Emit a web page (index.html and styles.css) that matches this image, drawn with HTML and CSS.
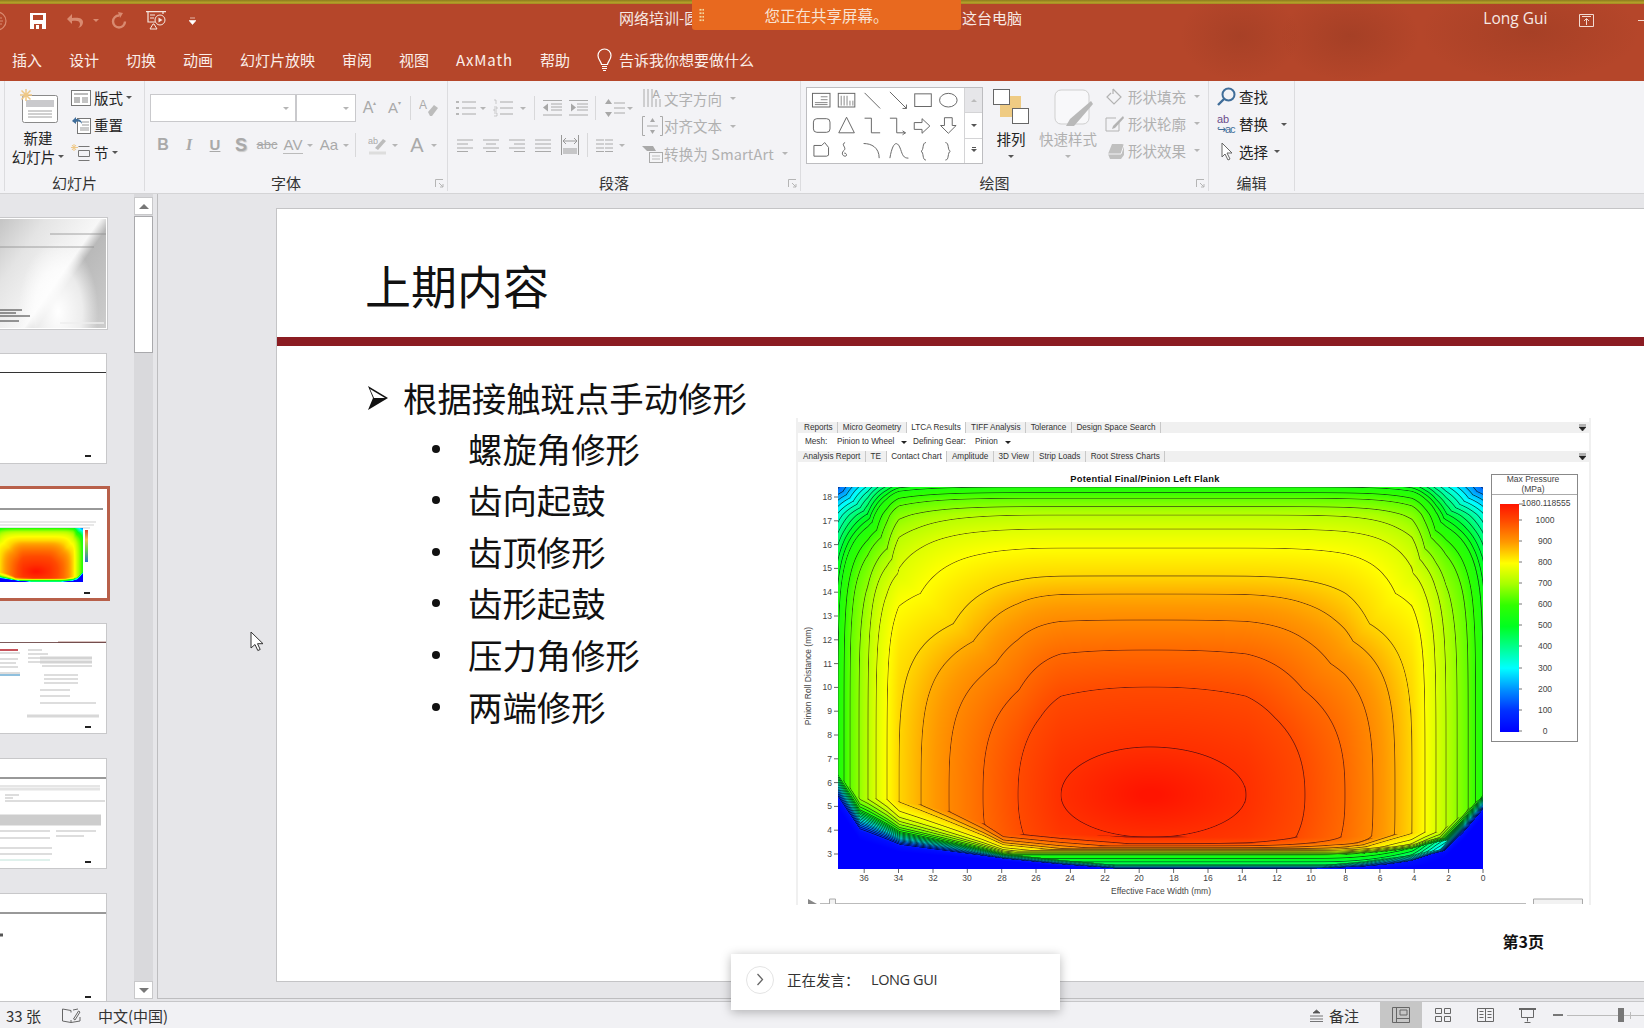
FILE: index.html
```html
<!DOCTYPE html>
<html lang="zh-CN">
<head>
<meta charset="utf-8">
<title>网络培训</title>
<link rel="stylesheet" href="styles.css">
</head>
<body>
<header class="appbar">
  <div class="topband"></div>
  <div class="titlerow">
    <svg class="t-office" width="10" height="24" viewBox="0 0 10 24"><circle cx="-1" cy="12" r="9" fill="none" stroke="#d98a70" stroke-width="1.2"/><path d="M0 9h4M0 12h5M0 15h4" stroke="#d98a70"/></svg>
    <svg class="t-save" width="16" height="16" viewBox="0 0 16 16"><path d="M0 0h16v16H0z" fill="#fff"/><path d="M3 2h10v5H3z" fill="#b5462a"/><path d="M4 11h8v5H4z" fill="#b5462a"/><path d="M6 12h3v4H6z" fill="#fff"/></svg>
    <svg class="t-undo" width="18" height="16" viewBox="0 0 18 16"><path d="M6 1L1 6l5 5V8c5-1 8 0 8 3 0 2-1 3-2 4 4-1 5-4 5-6 0-4-5-5-11-4z" fill="#d98a70"/></svg>
    <span class="caret caret-t"></span>
    <svg class="t-redo" width="18" height="18" viewBox="0 0 18 18"><path d="M9 3.500a6 6 0 1 0 6 6" fill="none" stroke="#d98a70" stroke-width="2.4"/><path d="M8 0l5 1-3 5z" fill="#d98a70"/></svg>
    <svg class="t-show" width="21" height="19" viewBox="0 0 21 19"><path d="M0 .7h20M2 1v10h7M17 1v2" fill="none" stroke="#f6e6df" stroke-width="1.2"/><circle cx="14" cy="9" r="5" fill="none" stroke="#f6e6df"/><path d="M12.500 6.500l4 2.500-4 2.500z" fill="#f6e6df"/><path d="M4 18l3-5h1l3 5z" fill="none" stroke="#f6e6df"/><path d="M4 4h5M4 7h4" stroke="#f6e6df"/></svg>
    <svg class="t-more" width="7" height="8" viewBox="0 0 7 8"><path d="M1 1h5M0 3.500h7L3.500 7.500z" fill="#fff" stroke="#fff" stroke-width=".6"/></svg>
    <span class="doc-title">网络培训-圆</span>
    <span class="doc-where">这台电脑</span>
    <span class="user">Long Gui</span>
    <svg class="t-ropt" width="15" height="13" viewBox="0 0 15 13"><path d="M.5.500h14v12H.5zM3 2.500h9M7.500 11V5M5 7l2.500-2.500L10 7" fill="none" stroke="#f3dbd2"/></svg>
    <span class="t-min"></span>
  </div>
  <nav class="tabs">
    <span>插入</span><span>设计</span><span>切换</span><span>动画</span><span>幻灯片放映</span><span>审阅</span><span>视图</span><span class="axmath">AxMath</span><span>帮助</span>
    <span class="tellme">
      <svg width="15" height="24" viewBox="0 0 15 24"><path d="M4.500 16.500C4 13 1 11.500 1 7.500a6.500 6.500 0 0 1 13 0c0 4-3 5.500-3.500 9z" fill="none" stroke="#fff" stroke-width="1.200"/><path d="M5 18.500h5M5 20.500h5M6 22.500h3" stroke="#fff" stroke-width="1.200"/></svg>
      告诉我你想要做什么
    </span>
  </nav>
</header>

<section class="ribbon">
  <div class="group g1">
    <div class="gbody">
      <div class="bigbtn newslide">
        <svg width="40" height="36" viewBox="0 0 40 36"><rect x="4.500" y="7.500" width="35" height="27" rx="2" fill="#fff" stroke="#8a8a8a"/><rect x="8" y="12" width="28" height="7" fill="#c9c9cc"/><path d="M10 23h24M10 26h24M10 29h24" stroke="#a0a0a0"/><path d="M8 1v12M2 7h12M3.500 2.500l9 9M12.500 2.500l-9 9" stroke="#efc886" stroke-width="1.500"/></svg>
        <span class="btxt">新建</span>
        <span class="btxt">幻灯片<i class="caret"></i></span>
      </div>
      <div class="col3">
        <div class="item"><svg width="20" height="16" viewBox="0 0 20 16"><rect x=".5" y=".5" width="19" height="15" fill="#fff" stroke="#777"/><path d="M3 3h14v2H3zM3 7h6v6H3z" fill="#bbb"/><path d="M11 8h6M11 10h6M11 12h6" stroke="#888"/></svg><span>版式</span><i class="caret"></i></div>
        <div class="item"><svg width="20" height="18" viewBox="0 0 20 18"><rect x="6.500" y="2.500" width="13" height="15" fill="#fff" stroke="#777"/><path d="M11 6h7M11 9h7M9 12h9M9 14h9" stroke="#999"/><path d="M1 5l4-4v2c4 0 6 2 6 5-1-2-3-3-6-2v2z" fill="#3f6d99"/></svg><span>重置</span></div>
        <div class="item"><svg width="20" height="18" viewBox="0 0 20 18"><path d="M7.500 2.500h11M7.500 6.500h11v6h-11zM7.500 16.500h11" fill="none" stroke="#777"/><path d="M3 0v7M0 3.500h7M1 1l4 5M5 1L1 6" stroke="#efc886"/></svg><span>节</span><i class="caret"></i></div>
      </div>
    </div>
    <div class="glabel">幻灯片</div>
  </div>

  <div class="group g2">
    <div class="gbody rows2 off">
      <div class="rrow">
        <div class="combo c-font"><i class="caret"></i></div>
        <div class="combo c-size"><i class="caret"></i></div>
        <span class="glyph w25 big">A<sup>▴</sup></span>
        <span class="glyph w25">A<sup>▾</sup></span>
        <span class="vsep"></span>
        <svg class="eraser" width="20" height="20" viewBox="0 0 20 20"><text x="0" y="11" font-size="12" fill="#aaa" font-family="Liberation Sans">A</text><path d="M9 14l6-7 4 3-6 8h-2z" fill="#bcbcbc"/></svg>
      </div>
      <div class="rrow r2">
        <span class="glyph w26 bold">B</span>
        <span class="glyph w26 ital">I</span>
        <span class="glyph w26 under">U</span>
        <span class="glyph w26 shadow">S</span>
        <span class="glyph w26 strike">abc</span>
        <span class="glyph w26 av">AV</span><i class="caret caret-s"></i>
        <span class="glyph w26">Aa</span><i class="caret caret-s"></i>
        <span class="vsep sp1"></span>
        <svg class="hilite" width="20" height="20" viewBox="0 0 20 20"><text x="0" y="9" font-size="9" fill="#aaa" font-family="Liberation Sans">ab</text><path d="M7 13l8-9 3 2-8 9z" fill="#bcbcbc"/><path d="M1 18h17" stroke="#ddd" stroke-width="3"/></svg>
        <i class="caret caret-h"></i>
        <span class="glyph w26 fontA">A</span><i class="caret caret-s"></i>
      </div>
    </div>
    <div class="glabel">字体<svg class="launch" width="9" height="9" viewBox="0 0 9 9"><path d="M.5 8V.5H8M4 4l4 4M8 5v3H5" fill="none" stroke="#b5b5b5"/></svg></div>
  </div>

  <div class="group g3">
    <div class="gbody g3body off">
      <div class="rows2 para">
        <div class="rrow">
          <svg class="p-bul" width="20" height="18" viewBox="0 0 20 18"><path d="M6 3h14M6 9h14M6 15h14" stroke="#aaa"/><path d="M0 2h3v2H0zM0 8h3v2H0zM0 14h3v2H0z" fill="#b8b8b8"/></svg><i class="caret caret-p"></i>
          <svg class="p-num" width="20" height="18" viewBox="0 0 20 18"><path d="M7 3h13M7 9h13M7 15h13" stroke="#aaa"/><path d="M1 1h2v4M1 8h3v2H1v2h3M1 14h3v3H1" fill="none" stroke="#b8b8b8" stroke-width=".7"/></svg><i class="caret caret-p2"></i>
          <span class="vsep s-a"></span>
          <svg class="p-ind" width="19" height="16" viewBox="0 0 19 16"><path d="M8 4h11M8 7h11M8 10h11M0 .5h19M0 15h19" stroke="#aaa"/><path d="M0 7.500l5-4v8z" fill="#a7a7a7"/></svg>
          <svg class="p-ind2" width="19" height="16" viewBox="0 0 19 16"><path d="M8 4h11M8 7h11M8 10h11M0 .5h19M0 15h19" stroke="#aaa"/><path d="M7 7.500l-5-4v8z" fill="#a7a7a7"/></svg>
          <span class="vsep s-b"></span>
          <svg class="p-ls" width="20" height="18" viewBox="0 0 20 18"><path d="M9 4h11M9 9h11M9 14h11" stroke="#aaa"/><path d="M3.500 0l3.500 5H0zM3.500 18L0 13h7z" fill="#a7a7a7"/></svg><i class="caret"></i>
        </div>
        <div class="rrow r2b">
          <svg class="p-al" width="16" height="13" viewBox="0 0 16 13"><path d="M0 1h16M0 5h11M0 9h16M0 12.500h11" stroke="#aaa"/></svg>
          <svg class="p-al" width="16" height="13" viewBox="0 0 16 13"><path d="M0 1h16M3 5h10M0 9h16M3 12.500h10" stroke="#aaa"/></svg>
          <svg class="p-al" width="16" height="13" viewBox="0 0 16 13"><path d="M0 1h16M5 5h11M0 9h16M5 12.500h11" stroke="#aaa"/></svg>
          <svg class="p-al" width="16" height="13" viewBox="0 0 16 13"><path d="M0 1h16M0 5h16M0 9h16M0 12.500h16" stroke="#aaa"/></svg>
          <svg class="p-dist" width="18" height="20" viewBox="0 0 18 20"><path d="M.5 0v20M17.500 0v20M2 14h14M2 16h14M2 18h14" stroke="#999"/><path d="M2 6h14M5 3L2 6l3 3M13 3l3 3-3 3" fill="none" stroke="#999"/></svg>
          <span class="vsep s-c"></span>
          <svg class="p-col" width="17" height="13" viewBox="0 0 17 13"><path d="M0 1h17M0 5h17M0 9h17M0 12.500h17" stroke="#aaa"/><path d="M8.500 0v13" stroke="#f3f3f6"/></svg><i class="caret"></i>
        </div>
      </div>
      <div class="col3 pcol">
        <div class="item"><svg width="21" height="20" viewBox="0 0 21 20"><path d="M2 0v18M6 0v18M10 0v18M14 10v8M18 10v8" stroke="#aaa"/><text x="10.500" y="9" font-size="11" fill="#aaa" font-family="Liberation Sans">A</text></svg><span>文字方向</span><i class="caret caret-r"></i></div>
        <div class="item"><svg width="21" height="20" viewBox="0 0 21 20"><path d="M3 .5H.5v19H3M18 .5h2.500v19H18M5 10h11" fill="none" stroke="#aaa"/><path d="M10.500 2L8 6h5zM10.500 18L8 14h5z" fill="#a7a7a7"/></svg><span>对齐文本</span><i class="caret caret-r"></i></div>
        <div class="item"><svg width="21" height="18" viewBox="0 0 21 18"><path d="M0 1h11l3 5H5z" fill="#a9a9a9"/><rect x="7.500" y="7.500" width="13" height="10" fill="#f5f5f7" stroke="#aaa"/><path d="M10 11h8M10 14h8" stroke="#bbb"/></svg><span class="sm-art">转换为 SmartArt</span><i class="caret caret-r"></i></div>
      </div>
    </div>
    <div class="glabel">段落<svg class="launch" width="9" height="9" viewBox="0 0 9 9"><path d="M.5 8V.5H8M4 4l4 4M8 5v3H5" fill="none" stroke="#b5b5b5"/></svg></div>
  </div>

  <div class="group g4">
    <div class="gbody g4body">
      <div class="gallery">
        <svg width="158" height="75" viewBox="0 0 158 77">
          <g fill="none" stroke="#666">
            <rect x="3.500" y="5.500" width="18" height="14"/><path d="M12 9h7M12 12h7M6 15h13M6 17h13" stroke="#888"/>
            <rect x="30" y="5.500" width="17" height="14"/><path d="M33 8v10M36 8v10M39 8v10M42 13v5M45 13v5" stroke="#888"/>
            <path d="M57 5l16 16M83 4l17 17M100 21v-4M100 21h-4"/>
            <rect x="108.500" y="6" width="17" height="13"/>
            <ellipse cx="143" cy="12.500" rx="9" ry="7"/>
            <rect x="4.500" y="31.500" width="17" height="14" rx="3.500"/>
            <path d="M38.500 30l8 16h-16z"/>
            <path d="M57 31h7v15h9M83 31h7v15h9M99 46l-3-2M99 46l-3 2"/>
            <path d="M108 35.500h8v-4l8 7.500-8 7.500v-4h-8z"/>
            <path d="M139 30.500h8v8h4l-8 8-8-8h4z"/>
            <path d="M5 59h8l3-3 4 5v8l-2 1H5z"/>
            <path d="M37 56c-5 2 2 5-1 8-3 2-2 6 1 6s1-4-1-3"/>
            <path d="M56 57c8 0 16 4 16 15M83 72c3-18 8-18 11-9 2 6 3 9 8 9"/>
            <path d="M120 56c-4 0-2 8-5 9 3 1 1 9 5 9M140 56c4 0 2 8 5 9-3 1-1 9-5 9"/>
          </g>
        </svg>
        <div class="gscroll"><span class="gs dim"><i class="caret up"></i></span><span class="gs"><i class="caret"></i></span><span class="gs"><i class="caret more"></i></span></div>
      </div>
      <div class="bigbtn arrange">
        <svg width="36" height="36" viewBox="0 0 36 36"><rect x="7" y="7" width="21" height="21" fill="#efcb83"/><rect x=".5" y=".5" width="16" height="15" fill="#fff" stroke="#666"/><rect x="19.500" y="19.500" width="16" height="15" fill="#fff" stroke="#666"/></svg>
        <span class="btxt">排列</span><i class="caret low"></i>
      </div>
      <div class="bigbtn quick off">
        <svg width="40" height="38" viewBox="0 0 40 38"><rect x="1" y="1" width="34" height="34" rx="6" fill="#f8f8fa" stroke="#cfcfcf"/><path d="M37 12l2 3-12 14-7 8H12l4-7z" fill="#b9b9b9"/></svg>
        <span class="btxt">快速样式</span><i class="caret low"></i>
      </div>
      <div class="col3 dcol off">
        <div class="item"><svg width="20" height="18" viewBox="0 0 20 18"><path d="M8 1l8 8-7 7-7-7 4-4M8 1v5" fill="none" stroke="#b3b3b3" stroke-width="1.200"/></svg><span>形状填充</span><i class="caret caret-r"></i></div>
        <div class="item"><svg width="20" height="18" viewBox="0 0 20 18"><path d="M11 3H1v13h13V8" fill="none" stroke="#b3b3b3"/><path d="M18 1l1 2-9 10-3 1 1-3z" fill="#b3b3b3"/></svg><span>形状轮廓</span><i class="caret caret-r"></i></div>
        <div class="item"><svg width="20" height="18" viewBox="0 0 20 18"><path d="M3 12L7 2h10a2 2 0 0 1 2 2v9l-3 4H5z" fill="#c0c0c0"/><path d="M3 12h13l3-9" fill="none" stroke="#f3f3f6"/></svg><span>形状效果</span><i class="caret caret-r"></i></div>
      </div>
    </div>
    <div class="glabel">绘图<svg class="launch" width="9" height="9" viewBox="0 0 9 9"><path d="M.5 8V.5H8M4 4l4 4M8 5v3H5" fill="none" stroke="#b5b5b5"/></svg></div>
  </div>

  <div class="group g5">
    <div class="gbody">
      <div class="col3 ecol">
        <div class="item"><svg width="19" height="19" viewBox="0 0 19 19"><circle cx="11.500" cy="7.500" r="6" fill="none" stroke="#3f6d99" stroke-width="2"/><path d="M7 12l-6 6" stroke="#3f6d99" stroke-width="2.400"/></svg><span>查找</span></div>
        <div class="item"><span class="abac">ab<br><b>↪ac</b></span><span>替换</span><i class="caret caret-e1"></i></div>
        <div class="item"><svg width="19" height="19" viewBox="0 0 19 19"><path d="M5 1v14l3-3 3 6 2-1-3-6h5z" fill="#fff" stroke="#666"/></svg><span>选择</span><i class="caret caret-e2"></i></div>
      </div>
    </div>
    <div class="glabel nolaunch">编辑</div>
  </div>
</section>

<main class="workspace">
  <aside class="sidebar">
    <div class="thumbs">
      <div class="thumb t-cover">
        <svg width="107" height="111" viewBox="0 0 107 111"><path d="M50 16h56M0 29h94" stroke="#8d8d8d" stroke-width=".8"/><path d="M0 92h22M0 95h16M0 98h30M0 103h19" stroke="#333" stroke-width="1"/><path d="M60 105h44" stroke="#eee" stroke-width="1.500"/></svg>
      </div>
      <div class="thumb">
        <svg width="107" height="111" viewBox="0 0 107 111"><path d="M0 19.500h106" stroke="#333"/><path d="M85 103h6" stroke="#222" stroke-width="2"/></svg>
      </div>
      <div class="thumb thumb-sel">
        <svg class="sel-svg" width="104" height="109" viewBox="0 0 104 109"><path d="M0 20h103" stroke="#333"/><path d="M0 33h96M0 36h94M0 39h90" stroke="#bbb" stroke-width=".7"/><path d="M84 104h6" stroke="#222" stroke-width="2"/></svg>
        <canvas id="miniChart" class="mini" width="91" height="54"></canvas>
        <span class="minileg"></span>
      </div>
      <div class="thumb">
        <svg width="107" height="111" viewBox="0 0 107 111"><path d="M58 19h48" stroke="#b0837d"/><path d="M0 19.500h106" stroke="#5a3030" stroke-width=".8"/><path d="M0 27h18" stroke="#c7525a" stroke-width="2"/><path d="M0 30h20M0 36h18M0 40h16M0 44h18M0 50h20" stroke="#bbb"/><path d="M0 52h20" stroke="#8fc0de" stroke-width="2"/><path d="M28 27h14M28 31h20M28 35h12M48 35h40M28 39h12M48 39h40M42 43h50" stroke="#aaa" stroke-width=".8"/><path d="M40 35h52M40 39h52" stroke="#d3d3d3" stroke-width="3"/><path d="M44 52h34M44 56h34M44 60h34M40 67h30M40 73h30M40 80h56" stroke="#aaa" stroke-width=".8"/><path d="M27 93h72" stroke="#d8d8d8" stroke-width="3"/><path d="M85 104h6" stroke="#222" stroke-width="2"/></svg>
      </div>
      <div class="thumb">
        <svg width="107" height="111" viewBox="0 0 107 111"><path d="M0 20h106" stroke="#333"/><path d="M0 28h100" stroke="#ccc"/><path d="M0 31h100" stroke="#e4e4e4" stroke-width="3"/><path d="M5 37h14M5 40h8M5 43h100" stroke="#aaa" stroke-width=".8"/><path d="M0 62h101" stroke="#cdcdcd" stroke-width="11"/><path d="M0 73h50M0 80h50M0 90h52M0 96h52M56 73h40M56 78h28" stroke="#aaa" stroke-width=".8"/><path d="M0 102h50" stroke="#bfe3d9"/><path d="M85 104h6" stroke="#222" stroke-width="2"/></svg>
      </div>
      <div class="thumb">
        <svg width="107" height="111" viewBox="0 0 107 111"><path d="M0 20h106" stroke="#333"/><path d="M0 42h3" stroke="#555" stroke-width="3"/><path d="M85 104h6" stroke="#222" stroke-width="2"/></svg>
      </div>
    </div>
    <div class="vscroll">
      <span class="sbtn"><i class="tri tri-up"></i></span>
      <span class="sthumb"></span>
      <span class="strack"></span>
      <span class="sbtn"><i class="tri"></i></span>
    </div>
  </aside>

  <div class="stage">
    <article class="slide">
      <h1 class="slide-title">上期内容</h1>
      <div class="slide-rule"></div>
      <div class="slide-body">
        <ul class="bullets">
          <li class="lvl1"><svg class="arrow" width="22" height="26" viewBox="0 0 22 26"><path d="M1 1l20 12L1 25l5-12z" fill="#111"/><path d="M3 4l15 9H7z" fill="#fff"/></svg>根据接触斑点手动修形</li>
          <li class="lvl2">螺旋角修形</li>
          <li class="lvl2">齿向起鼓</li>
          <li class="lvl2">齿顶修形</li>
          <li class="lvl2">齿形起鼓</li>
          <li class="lvl2">压力角修形</li>
          <li class="lvl2">两端修形</li>
        </ul>
        <div class="figwrap">
          <figure class="figure">
            <div class="tabstrip">
              <span>Reports</span><span>Micro Geometry</span><span class="on">LTCA Results</span><span>TIFF Analysis</span><span>Tolerance</span><span>Design Space Search</span>
              <svg class="ovf" width="7" height="7" viewBox="0 0 7 7"><path d="M0 1h7M0 3h7L3.500 7z" fill="#222" stroke="#222" stroke-width=".6"/></svg>
            </div>
            <div class="meshrow">
              <span class="m1">Mesh:</span><span class="m2">Pinion to Wheel</span><i class="tcar"></i><span class="m3">Defining Gear:</span><span class="m4">Pinion</span><i class="tcar"></i>
            </div>
            <div class="tabstrip sub">
              <span>Analysis Report</span><span>TE</span><span class="on">Contact Chart</span><span>Amplitude</span><span>3D View</span><span>Strip Loads</span><span>Root Stress Charts</span>
              <svg class="ovf" width="7" height="7" viewBox="0 0 7 7"><path d="M0 1h7M0 3h7L3.500 7z" fill="#222" stroke="#222" stroke-width=".6"/></svg>
            </div>
            <div class="chart">
              <svg class="chart-svg" width="793" height="442" viewBox="0 0 793 442">
                <defs>
                  <linearGradient id="scale" x1="0" y1="0" x2="0" y2="1">
                    <stop offset="0" stop-color="#ff1400"/><stop offset=".074" stop-color="#ff4a00"/><stop offset=".167" stop-color="#ff9800"/><stop offset=".26" stop-color="#ffff00"/><stop offset=".35" stop-color="#a8ff00"/><stop offset=".444" stop-color="#30ff00"/><stop offset=".537" stop-color="#00ff20"/><stop offset=".63" stop-color="#00ff90"/><stop offset=".72" stop-color="#00ffff"/><stop offset=".815" stop-color="#0090ff"/><stop offset=".907" stop-color="#0030ff"/><stop offset="1" stop-color="#0000ff"/>
                  </linearGradient>
                </defs>
                <text class="ct-title" x="349" y="20" text-anchor="middle">Potential Final/Pinion Left Flank</text>
                <text class="ct-ax" transform="translate(15 214) rotate(-90)" text-anchor="middle">Pinion Roll Distance (mm)</text>
                <text class="ct-ax" x="365" y="432" text-anchor="middle">Effective Face Width (mm)</text>
                <path d="M38 35h4M38 58.800h4M38 82.600h4M38 106.400h4M38 130.200h4M38 154h4M38 177.800h4M38 201.600h4M38 225.400h4M38 249.200h4M38 273h4M38 296.800h4M38 320.600h4M38 344.400h4M38 368.200h4M38 392h4M68.200 407v4M102.500 407v4M137 407v4M171.300 407v4M205.700 407v4M240 407v4M274.400 407v4M308.800 407v4M343.200 407v4M377.600 407v4M412 407v4M446.300 407v4M480.700 407v4M515 407v4M549.500 407v4M583.900 407v4M618.200 407v4M652.600 407v4M687 407v4" stroke="#666" fill="none"/>
                <g class="ct-tick" text-anchor="end">
                  <text x="36" y="38">18</text><text x="36" y="62">17</text><text x="36" y="86">16</text><text x="36" y="109">15</text><text x="36" y="133">14</text><text x="36" y="157">13</text><text x="36" y="181">12</text><text x="36" y="205">11</text><text x="36" y="228">10</text><text x="36" y="252">9</text><text x="36" y="276">8</text><text x="36" y="300">7</text><text x="36" y="324">6</text><text x="36" y="347">5</text><text x="36" y="371">4</text><text x="36" y="395">3</text>
                </g>
                <g class="ct-tick" text-anchor="middle">
                  <text x="68" y="419">36</text><text x="102.500" y="419">34</text><text x="137" y="419">32</text><text x="171" y="419">30</text><text x="206" y="419">28</text><text x="240" y="419">26</text><text x="274" y="419">24</text><text x="309" y="419">22</text><text x="343" y="419">20</text><text x="378" y="419">18</text><text x="412" y="419">16</text><text x="446" y="419">14</text><text x="481" y="419">12</text><text x="515" y="419">10</text><text x="549.500" y="419">8</text><text x="584" y="419">6</text><text x="618" y="419">4</text><text x="652.500" y="419">2</text><text x="687" y="419">0</text>
                </g>
                <rect x="695.500" y="12.500" width="86" height="267" fill="#fff" stroke="#888"/>
                <path d="M696 32.500h85" stroke="#aaa"/>
                <rect x="704" y="42" width="19" height="228" fill="url(#scale)"/>
                <g class="ct-tick" text-anchor="middle">
                  <text x="737" y="20">Max Pressure</text><text x="737" y="29.500">(MPa)</text>
                  <text x="750" y="44">1080.118555</text><text x="749" y="61">1000</text><text x="749" y="82">900</text><text x="749" y="103">800</text><text x="749" y="124">700</text><text x="749" y="145">600</text><text x="749" y="166">500</text><text x="749" y="187">400</text><text x="749" y="209">300</text><text x="749" y="230">200</text><text x="749" y="251">100</text><text x="749" y="272">0</text>
                </g>
                <path d="M723 42h4M723 58h3M723 79h3M723 100h3M723 121h3M723 142h3M723 163h3M723 184h3M723 206h3M723 227h3M723 248h3M723 269h3" stroke="#777"/>
                <path d="M12 437l9 5H12z" fill="#888"/>
                <path d="M24 441.500h706" stroke="#bbb"/>
                <path d="M33.500 442v-5h6v5M737.500 442v-5h49v5" fill="#f2f2f2" stroke="#aaa"/>
              </svg>
              <canvas id="heatmap" class="heat" width="645" height="382"></canvas>
            </div>
          </figure>
          <div class="pageno">第3页</div>
        </div>
      </div>
    </article>
  </div>
</main>

<footer class="statusbar">
  <span class="st-count">33 张</span>
  <svg class="st-note" width="19" height="15" viewBox="0 0 19 15"><path d="M9 2.500L.5 1v12L9 14.500M9 2.500v2M9 12v2.500M9 14.500l9-1.500V9M11 2l5-1M13 12l5-8-1.500-1-5 8z" fill="none" stroke="#666"/></svg>
  <span class="st-lang">中文(中国)</span>
  <span class="st-right">
    <span class="st-notes"><svg width="13" height="13" viewBox="0 0 13 13"><path d="M3 4l3.500-3L10 4zM0 7h13M0 10h13M0 12.500h13" fill="#555" stroke="#555" stroke-width=".8"/></svg>备注</span>
    <span class="vbtn active"><svg width="18" height="16" viewBox="0 0 18 16"><path d="M.5.5h17v15H.5zM4.500.5v15M8 3h7v5H8zM4.500 11.500h13" fill="none" stroke="#666"/></svg></span>
    <span class="vbtn"><svg width="16" height="14" viewBox="0 0 16 14"><path d="M.5.500h6v5h-6zM9.500.5h6v5h-6zM.5 8.500h6v5h-6zM9.500 8.500h6v5h-6z" fill="none" stroke="#666"/></svg></span>
    <span class="vbtn"><svg width="17" height="14" viewBox="0 0 17 14"><path d="M.5.500h16v13H.5zM8.500.5v13M2.500 3.500h4M2.500 6.500h4M2.500 9.500h4M10.500 3.500h4M10.500 6.500h4M10.500 9.500h4" fill="none" stroke="#666"/></svg></span>
    <span class="vbtn"><svg width="17" height="15" viewBox="0 0 17 15"><path d="M0 1h17" stroke="#666" stroke-width="2"/><path d="M2.500 1v8.500h12V1M8.500 9.500v4M5.500 14.500h6" fill="none" stroke="#666"/></svg></span>
    <span class="zminus"></span>
    <span class="zslider"><i class="ztick"></i><i class="zthumb"></i></span>
  </span>
</footer>

<div class="share-banner"><span class="grip"></span>您正在共享屏幕。</div>
<div class="speaker">
  <span class="sp-circle"><svg width="8" height="13" viewBox="0 0 8 13"><path d="M1.500 1l5 5.500-5 5.500" fill="none" stroke="#666" stroke-width="1.300"/></svg></span>
  <span class="sp-label">正在发言：</span><span class="sp-name">LONG GUI</span>
</div>
<svg class="cursor" width="14" height="21" viewBox="0 0 14 21"><path d="M1 1v16l4-3.500 2.800 6 2.400-1-2.700-5.800H13z" fill="#fff" stroke="#333" stroke-width="1"/></svg>

<script src="chart.js"></script>
</body>
</html>
```

FILE: styles.css
```css
* { box-sizing: border-box; }
html, body { margin: 0; padding: 0; }
body {
  position: relative;
  width: 1644px;
  height: 1028px;
  overflow: hidden;
  display: flex;
  flex-direction: column;
  background: #e6e6e9;
  color: #222;
  font-family: "Noto Sans CJK SC", "Liberation Sans", sans-serif;
  font-size: 14.5px;
}
svg { display: block; flex: none; }
i { display: block; font-style: normal; }

/* ------ caret ------ */
.caret {
  display: inline-block;
  flex: none;
  width: 0;
  height: 0;
  border-left: 3px solid transparent;
  border-right: 3px solid transparent;
  border-top: 3px solid #555;
}
.off .caret { border-top-color: #b5b5b5; }

/* ------ title bar ------ */
.appbar {
  height: 81px;
  flex: none;
  background:
    radial-gradient(ellipse 60px 45px at 1240px 36px, rgba(120, 45, 25, .22), transparent 100%),
    radial-gradient(ellipse 70px 45px at 1350px 36px, rgba(120, 45, 25, .26), transparent 100%),
    radial-gradient(ellipse 110px 50px at 1530px 32px, rgba(120, 45, 25, .24), transparent 100%),
    #b5462a;
  color: #fff;
}
.topband { height: 4px; background: linear-gradient(#8c7a1e, #b3a029 60%, #a38a25); }
.titlerow { height: 35px; display: flex; align-items: center; padding-bottom: 2px; }
.t-office { margin-right: 22px; margin-left: -2px; }
.t-save { margin-right: 20px; }
.t-undo { margin-right: 9px; }
.caret-t { border-top-color: #d98a70; margin-right: 11px; }
.t-redo { margin-right: 18px; }
.t-show { margin-right: 22px; }
.t-more { margin-right: 423px; }
.doc-title { width: 344px; margin-top: -5px; font-size: 15px; line-height: 20px; color: #f7e9e4; white-space: nowrap; }
.doc-where { width: 523px; margin-top: -5px; font-size: 15px; line-height: 20px; color: #f7e9e4; }
.user { width: 96px; margin-top: -5px; font-family: "Open Sans", sans-serif; font-size: 15.500px; line-height: 20px; color: #f7e9e4; }
.t-ropt { margin-right: 44px; }
.t-min { width: 6px; height: 1px; background: #f3dbd2; }

.tabs {
  height: 42px;
  display: flex;
  align-items: center;
  gap: 27px;
  padding-left: 12px;
  font-size: 15px;
  line-height: 22px;
  color: #fbeee9;
}
.axmath { letter-spacing: .85px; }
.tellme { display: flex; align-items: center; gap: 7px; }

/* ------ ribbon ------ */
.ribbon {
  height: 113px;
  flex: none;
  display: flex;
  padding-left: 4px;
  background: #f3f3f6;
  border-bottom: 1px solid #d4d4d6;
}
.group { border-right: 1px solid #dcdcdf; flex: none; height: 110px; }
.g1 { width: 141px; border-left: 1px solid #dcdcdf; }
.g2 { width: 303px; }
.g3 { width: 353px; }
.g4 { width: 408px; }
.g5 { width: 86px; }
.gbody { height: 92px; display: flex; line-height: 20px; }
.glabel { position: relative; height: 20px; line-height: 20px; font-size: 15px; text-align: center; padding-right: 20px; color: #333; }
.g1 .glabel, .nolaunch { padding-right: 0; }
.launch { position: absolute; right: 3px; top: 6px; }

.bigbtn { display: flex; flex-direction: column; align-items: center; }
.btxt { display: flex; align-items: center; gap: 3px; line-height: 19px; height: 19px; white-space: nowrap; }
.newslide { width: 66px; padding-top: 7px; }
.newslide svg { margin: 0 0 4px 0; }
.col3 { padding-top: 3px; }
.item { display: flex; align-items: center; height: 27.500px; gap: 3px; white-space: nowrap; }

.off, .off .btxt { color: #b0b0b0; }

.rows2 { display: block; padding: 13px 0 0 5px; }
.rrow { display: flex; align-items: center; height: 28px; }
.rrow.r2, .rrow.r2b { margin-top: 9px; }
.r2b { padding-left: 1px; }
.combo { position: relative; height: 28px; background: #fff; border: 1px solid #c9c9cc; }
.c-font { width: 146px; }
.c-size { width: 60px; margin-right: 1px; }
.combo .caret { position: absolute; right: 6px; top: 12px; }
.glyph { display: block; flex: none; text-align: center; font-family: "Liberation Sans", sans-serif; font-size: 15px; color: #a9a9a9; line-height: 20px; }
.glyph sup { font-size: 6px; vertical-align: 8px; line-height: 0; }
.big { font-size: 16px; }
.w25 { width: 25px; }
.w26 { width: 26px; }
.vsep { display: block; flex: none; width: 1px; height: 24px; background: #d8d8da; }
.g2 .vsep { margin-left: 3px; }
.eraser { margin-left: 8px; }
.bold { font-weight: bold; font-size: 16px; }
.ital { font-style: italic; font-family: "Liberation Serif", serif; font-weight: bold; font-size: 16px; }
.under { text-decoration: underline; font-weight: bold; }
.shadow { font-weight: bold; font-size: 18px; text-shadow: 1px 1px 1px #c8c8c8; }
.strike { text-decoration: line-through; font-size: 13px; }
.av { border-bottom: 1px solid #bbb; line-height: 16px; width: 20px; margin: 0 3px; }
.fontA { font-size: 20px; margin-left: 6px; font-weight: 500; }
.caret-s { margin-left: 1px; margin-right: 3px; }
.sp1 { margin: 0 12px 0 3px !important; }
.hilite { margin-right: 4px; }

.g3body { display: flex; }
.para { width: 190px; padding-left: 8px; }
.pcol { padding-left: 4px; padding-top: 4px; }
.pcol .item { gap: 1px; }
.sm-art { letter-spacing: .15px; }
.p-bul { margin-right: 4px; }
.caret-p { margin-right: 7px; }
.p-num { margin-right: 7px; }
.caret-p2 { margin-right: 8px; }
.s-a { margin: 0 8px 0 0; }
.p-ind { margin-right: 7px; }
.p-ind2 { margin-right: 7px; }
.s-b { margin-right: 9px; }
.p-ls { margin-right: 2px; }
.p-al { margin-right: 10px; }
.p-dist { margin: 0 8px 0 0; }
.s-c { margin-right: 8px; }
.p-col { margin-right: 6px; }
.caret-r { margin-left: 7px; }

.g4body { display: flex; }
.gallery { display: flex; margin: 6px 0 0 5px; width: 177px; height: 77px; background: #fff; border: 1px solid #bdbdc0; }
.gscroll { width: 18px; flex: none; display: flex; flex-direction: column; margin-left: -1px; border-left: 1px solid #d4d4d6; }
.gs { display: flex; flex: 1; align-items: center; justify-content: center; border-bottom: 1px solid #d4d4d6; background: #fff; }
.gs:last-child { border-bottom: 0; }
.gs.dim { background: #e6e6e9; }
.caret.up { transform: rotate(180deg); }
.dim .caret { border-top-color: #bbb; }
.more { box-shadow: 0 -3px 0 -1px #555; }
.arrange { width: 40px; margin-left: 8px; padding-top: 8px; }
.arrange svg { margin-bottom: 4px; }
.arrange .low, .quick .low { margin-top: 7px; }
.quick { width: 62px; margin-left: 6px; padding-top: 8px; }
.quick svg { margin: 0 0 2px 12px; }
.dcol { padding-left: 6px; padding-top: 2px; }
.dcol .item { height: 27px; }
.dcol .caret-r { margin-left: 5px; }

.ecol { padding-left: 8px; padding-top: 2px; }
.abac { display: block; width: 19px; font-family: "Liberation Sans", sans-serif; font-size: 11px; line-height: 10px; color: #6b4c8a; }
.abac b { font-weight: normal; color: #3f6d99; letter-spacing: -1px; }
.caret-e1 { margin-left: 10px; }
.caret-e2 { margin-left: 3px; }

/* ------ workspace ------ */
.workspace { flex: 1; min-height: 0; display: flex; border-bottom: 1px solid #c6c6c8; }
.sidebar { width: 157px; flex: none; display: flex; overflow: hidden; padding-right: 4px; }
.thumbs { width: 134px; flex: none; padding-top: 24px; }
.thumb { position: relative; width: 107px; height: 111px; margin-bottom: 24px; background: #fff; border: 1px solid #c8c8ca; border-left: 0; overflow: hidden; }
.thumb svg { margin-top: -1px; }
.t-cover {
  background:
    radial-gradient(ellipse 40px 70px at 55% 85%, #fff 0, rgba(255,255,255,.7) 60%, transparent 100%),
    linear-gradient(125deg, #c4c4c4 0, #e4e4e4 25%, #f7f7f7 55%, #b9b9b9 62%, #cdcdcd 100%);
  border-color: #fff;
  outline: 1px solid #c8c8ca;
}
.thumb-sel { width: 110px; height: 115px; margin: -2px 0 22px; border: 3px solid #b8604a; border-left: 0; }
.thumb-sel svg { margin-top: 0; }
.mini { position: absolute; left: -8px; top: 39px; }
.minileg { position: absolute; left: 85px; top: 41px; width: 3px; height: 32px; background: linear-gradient(#d9432a, #f0c24a 30%, #6fd04a 60%, #2a6fd0); }

.vscroll { width: 19px; flex: none; display: flex; flex-direction: column; padding-top: 3px; background: #d9d9dc; margin-bottom: 2px; }
.sbtn { display: flex; height: 18px; flex: none; background: #fff; border: 1px solid #c8c8ca; align-items: center; justify-content: center; }
.sthumb { height: 137px; flex: none; margin-top: 1px; background: #fff; border: 1px solid #a9a9ac; }
.strack { flex: 1; }
.tri { width: 0; height: 0; border-left: 5px solid transparent; border-right: 5px solid transparent; border-top: 5px solid #777; }
.tri-up { border-top: 0; border-bottom: 5px solid #777; }

.stage {
  flex: 1;
  min-width: 0;
  padding: 14px 0 17px 118px;
  margin-bottom: 2px;
  border-left: 1px solid #bdbdbf;
  border-bottom: 1px solid #bdbdbf;
  overflow: hidden;
}
.slide {
  height: 774px;
  width: 1400px;
  background: #fff;
  border: 1px solid #c4c4c6;
  border-right: 0;
  display: flex;
  flex-direction: column;
  color: #111;
}
.slide-title {
  height: 128px;
  flex: none;
  margin: 0;
  padding: 43px 0 0 88px;
  font-size: 46px;
  font-weight: 400;
  line-height: 64px;
}
.slide-rule { height: 9px; flex: none; background: #8b1c22; }
.slide-body { flex: 1; display: flex; min-height: 0; }
.bullets { width: 519px; flex: none; margin: 0; padding: 26px 0 0 90px; list-style: none; font-size: 34.400px; line-height: 51.600px; }
.bullets li { display: flex; align-items: center; height: 51.600px; white-space: nowrap; }
.lvl1 { gap: 14px; margin-bottom: -1px; }
.lvl2 { position: relative; padding-left: 101px; }
.lvl2::before { content: ""; position: absolute; left: 65px; top: 22px; width: 8px; height: 8px; border-radius: 50%; background: #111; }

.figwrap { width: 795px; flex: none; padding-top: 72px; }
.figure { margin: 0; height: 487px; padding-top: 4px; border-left: 2px solid #f0f0f0; border-right: 2px solid #f0f0f0; font-family: "Liberation Sans", sans-serif; font-size: 8.200px; color: #333; }
.tabstrip { position: relative; height: 11px; display: flex; background: #f0f0f0; line-height: 11px; padding-left: 1px; white-space: nowrap; }
.tabstrip span { padding: 0 4.600px; border-right: 1px solid #c8c8c8; }
.tabstrip span:first-child { padding-left: 5px; }
.tabstrip .on { background: #fff; }
.tabstrip.sub { padding-left: 0; }
.ovf { position: absolute; right: 3px; top: 2px; }
.meshrow { height: 18px; display: flex; align-items: center; line-height: 18px; padding-left: 7px; }
.m1 { width: 32px; }
.m2 { width: 64px; }
.m3 { width: 62px; margin-left: 6px; }
.m4 { width: 30px; }
.tcar { width: 0; height: 0; border-left: 3px solid transparent; border-right: 3px solid transparent; border-top: 3px solid #222; }
.chart { position: relative; height: 442px; }
.chart-svg { margin-left: -2px; font-family: "Liberation Sans", sans-serif; }
.ct-title { font-size: 9.300px; font-weight: bold; fill: #111; letter-spacing: .25px; }
.ct-ax { font-size: 8.500px; fill: #444; }
.ct-tick text { font-size: 8.500px; fill: #444; }
.heat { position: absolute; left: 40px; top: 25px; }
.pageno { margin: 25px 47px 0 0; text-align: right; font-size: 16px; font-weight: 700; line-height: 22px; color: #111; }

/* ------ status bar ------ */
.statusbar { height: 26px; flex: none; display: flex; align-items: center; background: #f1f1f4; font-size: 15px; color: #333; }
.st-count { padding-left: 6px; width: 62px; }
.st-note { margin-right: 17px; }
.st-lang { white-space: nowrap; }
.st-right { margin-left: auto; display: flex; align-items: center; height: 26px; width: 334px; }
.st-notes { display: flex; align-items: center; gap: 6px; width: 70px; }
.vbtn { display: flex; width: 42px; height: 26px; align-items: center; justify-content: center; }
.vbtn.active { background: #c6c6c6; }
.zminus { width: 10px; height: 2px; background: #777; margin: 0 4px 0 5px; flex: none; }
.zslider { position: relative; flex: 1; height: 1px; background: #bbb; }
.zthumb { position: absolute; left: 51px; top: -7px; width: 6px; height: 14px; background: #777; }
.ztick { position: absolute; left: 63px; top: -3px; width: 1px; height: 7px; background: #bbb; }

/* ------ overlays ------ */
.share-banner {
  position: absolute;
  left: 692px;
  top: 0;
  width: 269px;
  height: 30px;
  background: #e8691f;
  border-radius: 0 0 3px 3px;
  color: #f8e3d3;
  font-size: 15.500px;
  line-height: 30px;
  text-align: center;
}
.grip { position: absolute; left: 7px; top: 8px; width: 5px; height: 14px; background: radial-gradient(circle, #f3d9a0 1px, transparent 1.200px) 0 0 / 3px 3.500px; }
.speaker {
  position: absolute;
  left: 731px;
  top: 954px;
  width: 329px;
  height: 56px;
  display: flex;
  align-items: center;
  padding-bottom: 5px;
  background: #fff;
  box-shadow: 0 2px 10px rgba(0, 0, 0, .28);
  font-size: 14.500px;
  color: #333;
}
.sp-circle { display: flex; align-items: center; justify-content: center; width: 28px; height: 28px; margin: 0 13px 0 15px; border: 1px solid #e4e4e4; border-radius: 50%; }
.sp-label { width: 84px; }
.sp-name { font-family: "Open Sans", sans-serif; letter-spacing: -.4px; }
.cursor { position: absolute; left: 250px; top: 631px; }
```

FILE: chart.js
```js
(function () {
  function interp(tab, x) {
    if (x <= tab[0][0]) return tab[0][1];
    for (var i = 1; i < tab.length; i++) {
      if (x <= tab[i][0]) {
        var a = tab[i - 1], b = tab[i];
        return a[1] + (b[1] - a[1]) * (x - a[0]) / (b[0] - a[0]);
      }
    }
    return tab[tab.length - 1][1];
  }
  var L = [[0,0],[89,.156],[132,.35],[167,.47],[201,.57],[229,.65],[251,.71],[263,.8],[274,.86],[282,.9],[312,1],[340,1.1]];
  var R = [[0,0],[96,.156],[155,.35],[195,.47],[223,.57],[245,.65],[262,.71],[275,.8],[286,.86],[296,.9],[333,1],[360,1.1]];
  var T = [[0,0],[48,.156],[108,.35],[145,.47],[175,.57],[201,.65],[219,.71],[247,.8],[266,.86],[280,.9],[308,1],[330,1.1]];
  var B = [[0,0],[.57,.156],[.66,.35],[.72,.6],[.76,.86],[.81,1],[.95,1.03],[1,1.14],[1.3,1.25],[2,1.5]];
  var V = [[0,1085],[.156,1040],[.35,1000],[.47,960],[.57,920],[.65,880],[.71,840],[.8,800],[.86,760],[.9,720],[.93,680],[.96,640],[.98,600],[1,560],[1.04,400],[1.09,200],[1.14,30],[1.2,0]];
  var C = [[0,[0,0,255]],[100,[0,48,255]],[200,[0,144,255]],[300,[0,255,255]],[400,[0,255,144]],[500,[0,255,32]],[600,[48,255,0]],[700,[168,255,0]],[800,[255,255,0]],[900,[255,152,0]],[1000,[255,74,0]],[1080,[255,20,0]]];
  var YL = [[0,805],[22,837],[62,850],[222,866],[312,873]];
  var YR = [[0,815],[20,838],[43,860],[73,866],[120,869],[333,873]];
  var cx = 1150, cy = 795;

  function value(X, Y) {
    var left = X < cx;
    var px = Math.abs(X - cx);
    var dx = interp(left ? L : R, px);
    var dy;
    if (Y < cy) {
      dy = interp(T, cy - Y);
    } else {
      var t = (Y - cy) / 74;
      var k = Math.max(0, dx - .4);
      dy = interp(B, t * (1 + 1.2 * k * k));
    }
    var d0 = Math.min(1, Math.max(dx, dy));
    var p = 2 + 5 * d0 * d0 * d0;
    var d = Math.pow(Math.pow(dx, p) + Math.pow(dy, p), 1 / p);
    var e = left ? X - 838 : 1483 - X;
    var yb = interp(left ? YL : YR, e);
    var w = left ? 6 + 40 * Math.max(0, dx - .4) : 5 + 24 * Math.max(0, dx - .4);
    d = Math.max(d, 1.18 + (Y - yb) / w * .18);
    return interp(V, d);
  }

  function colour(v) {
    for (var i = 1; i < C.length; i++) {
      if (v <= C[i][0]) {
        var a = C[i - 1], b = C[i], f = (v - a[0]) / (b[0] - a[0]);
        return [a[1][0] + (b[1][0] - a[1][0]) * f, a[1][1] + (b[1][1] - a[1][1]) * f, a[1][2] + (b[1][2] - a[1][2]) * f];
      }
    }
    return C[C.length - 1][1];
  }

  function draw(id, lines) {
    var cv = document.getElementById(id);
    if (!cv) return;
    var W = cv.width, H = cv.height, ctx = cv.getContext('2d');
    var img = ctx.createImageData(W, H), val = new Float32Array((W + 1) * (H + 1));
    var x, y;
    for (y = 0; y <= H; y++) for (x = 0; x <= W; x++) {
      val[y * (W + 1) + x] = value(838 + (x + .5) * 645 / W, 487 + (y + .5) * 382 / H);
    }
    for (y = 0; y < H; y++) for (x = 0; x < W; x++) {
      var i = y * (W + 1) + x, v = val[i], c = colour(v), a = 0;
      if (lines && v > 60 && v < 1060) {
        var gx = val[i + 1] - v, gy = val[i + W + 1] - v;
        var g = Math.sqrt(gx * gx + gy * gy) || .001;
        var lev = Math.round(v / 40) * 40;
        var dist = Math.abs(v - lev) / g;
        a = Math.max(0, 1 - dist / .8) * .7;
      }
      var o = (y * W + x) * 4;
      img.data[o] = c[0] * (1 - a) + 60 * a * (c[0] / 255);
      img.data[o + 1] = c[1] * (1 - a) + 30 * a * (c[1] / 255);
      img.data[o + 2] = c[2] * (1 - a) + 20 * a;
      img.data[o + 3] = 255;
    }
    ctx.putImageData(img, 0, 0);
  }
  draw('heatmap', true);
  draw('miniChart', false);
})();
```
